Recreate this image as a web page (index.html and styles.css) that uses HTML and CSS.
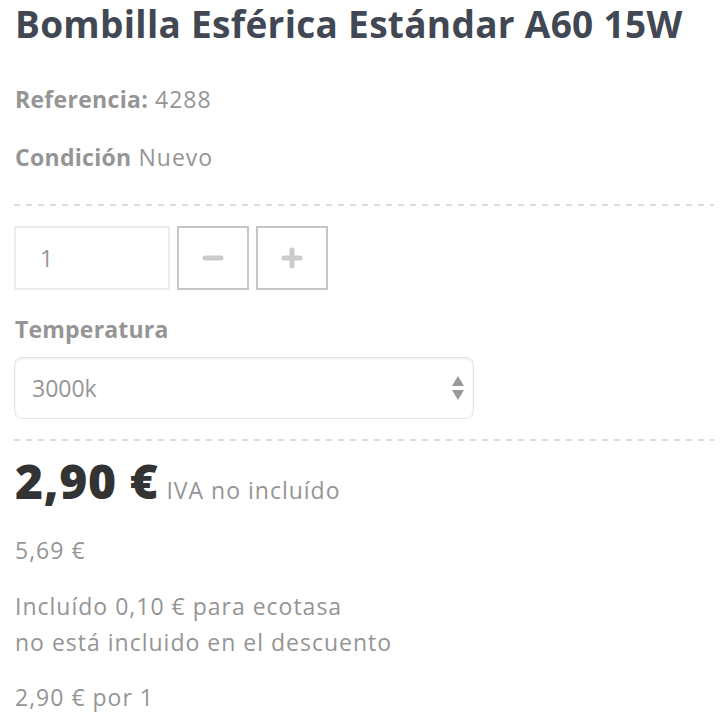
FILE: index.html
```html
<!DOCTYPE html>
<html lang="es">
<head>
<meta charset="utf-8">
<title>Bombilla Esférica Estándar A60 15W</title>
<link rel="stylesheet" href="styles.css">
</head>
<body>
<div class="product">
  <h1 class="title">Bombilla Esférica Estándar A60 15W</h1>
  <p class="meta meta-ref"><span class="label">Referencia:</span> 4288</p>
  <p class="meta meta-cond"><span class="label">Condición</span> Nuevo</p>
  <div class="dash"></div>
  <div class="qty">
    <input class="qty-input" type="text" value="1">
    <button class="qty-btn" type="button" aria-label="menos">
      <svg width="22" height="22" viewBox="0 0 22 22"><rect x="0.5" y="8.5" width="21" height="5" rx="2.5" fill="#cbcbcb"/></svg>
    </button>
    <button class="qty-btn" type="button" aria-label="más">
      <svg width="22" height="22" viewBox="0 0 22 22"><rect x="0.5" y="8.5" width="21" height="5" rx="2.5" fill="#cbcbcb"/><rect x="8.5" y="0.5" width="5" height="21" rx="2.5" fill="#cbcbcb"/></svg>
    </button>
  </div>
  <div class="field-label">Temperatura</div>
  <div class="select-wrap">
    <select class="select"><option>3000k</option></select>
    <svg class="select-arrows" width="12" height="24" viewBox="0 0 12 24"><path d="M6 0 L12 10 L0 10 Z" fill="#999"/><path d="M0 14 L12 14 L6 24 Z" fill="#999"/></svg>
  </div>
  <div class="dash dash-2"></div>
  <div class="price-row">
    <span class="price">2,90 €</span>
    <span class="tax">IVA no incluído</span>
  </div>
  <p class="line line-old">5,69 €</p>
  <p class="line line-eco">Incluído 0,10 € para ecotasa<br>no está incluido en el descuento</p>
  <p class="line line-unit">2,90 € por 1</p>
</div>
</body>
</html>
```
FILE: styles.css
```css
html, body {
  margin: 0;
  padding: 0;
  background: #fff;
}
body {
  font-family: "Open Sans", "Lato", sans-serif;
  color: #959595;
}
.product {
  padding: 0 6px 0 14px;
}
.title {
  margin: 0;
  padding-top: 0;
  font-size: 37px;
  line-height: 48px;
  font-weight: 700;
  color: #414753;
  padding-left: 1px;
  letter-spacing: 0.3px;
}
.meta {
  margin: 0;
  font-size: 23px;
  line-height: 30px;
  padding-left: 1px;
  letter-spacing: 1px;
}
.meta-ref { margin-top: 36px; }
.meta-cond { margin-top: 28px; }
.label {
  font-weight: 700;
  letter-spacing: 0.3px;
}
.dash {
  height: 2px;
  margin-top: 32px;
  background: repeating-linear-gradient(to right, #dcdcdc 0 6px, transparent 6px 12px);
}
.qty {
  display: flex;
  gap: 7px;
  margin-top: 20px;
}
.qty-input {
  box-sizing: border-box;
  width: 156px;
  height: 64px;
  border: 2px solid #ececec;
  padding: 0 0 0 24px;
  font: inherit;
  font-size: 23px;
  color: #959595;
  outline: none;
  margin: 0;
}
.qty-btn {
  box-sizing: border-box;
  width: 72px;
  height: 64px;
  border: 2px solid #c3c6cb;
  background: #fff;
  padding: 0;
  margin: 0;
  display: flex;
  align-items: center;
  justify-content: center;
}
.qty-btn svg { display: block; }
.field-label {
  margin-top: 24px;
  font-size: 23px;
  line-height: 30px;
  font-weight: 700;
  padding-left: 1px;
  letter-spacing: 0.2px;
}
.select-wrap {
  position: relative;
  width: 460px;
  margin-top: 13px;
}
.select {
  box-sizing: border-box;
  appearance: none;
  -webkit-appearance: none;
  width: 100%;
  height: 62px;
  border: 1px solid #e3e3e3;
  border-radius: 8px;
  box-shadow: inset 0 1px 3px rgba(0,0,0,0.08);
  background: #fff;
  padding: 0 0 0 17px;
  font: inherit;
  font-size: 23px;
  color: #959595;
  outline: none;
  margin: 0;
  display: block;
}
.select-arrows {
  position: absolute;
  right: 10px;
  top: 19px;
  pointer-events: none;
}
.dash-2 { margin-top: 20px; }
.price-row {
  display: flex;
  align-items: baseline;
  gap: 8px;
  margin-top: 12px;
  padding-left: 1px;
}
.price {
  font-size: 48px;
  line-height: 56px;
  font-weight: 800;
  color: #333;
  letter-spacing: 0.6px;
}
.tax {
  font-size: 23px;
  color: #959595;
  letter-spacing: 1px;
}
.line {
  margin: 0;
  font-size: 23px;
  line-height: 36px;
  padding-left: 1px;
  letter-spacing: 1px;
}
.line-old { margin-top: 23px; }
.line-eco { margin-top: 20px; }
.line-unit { margin-top: 19px; }
```
